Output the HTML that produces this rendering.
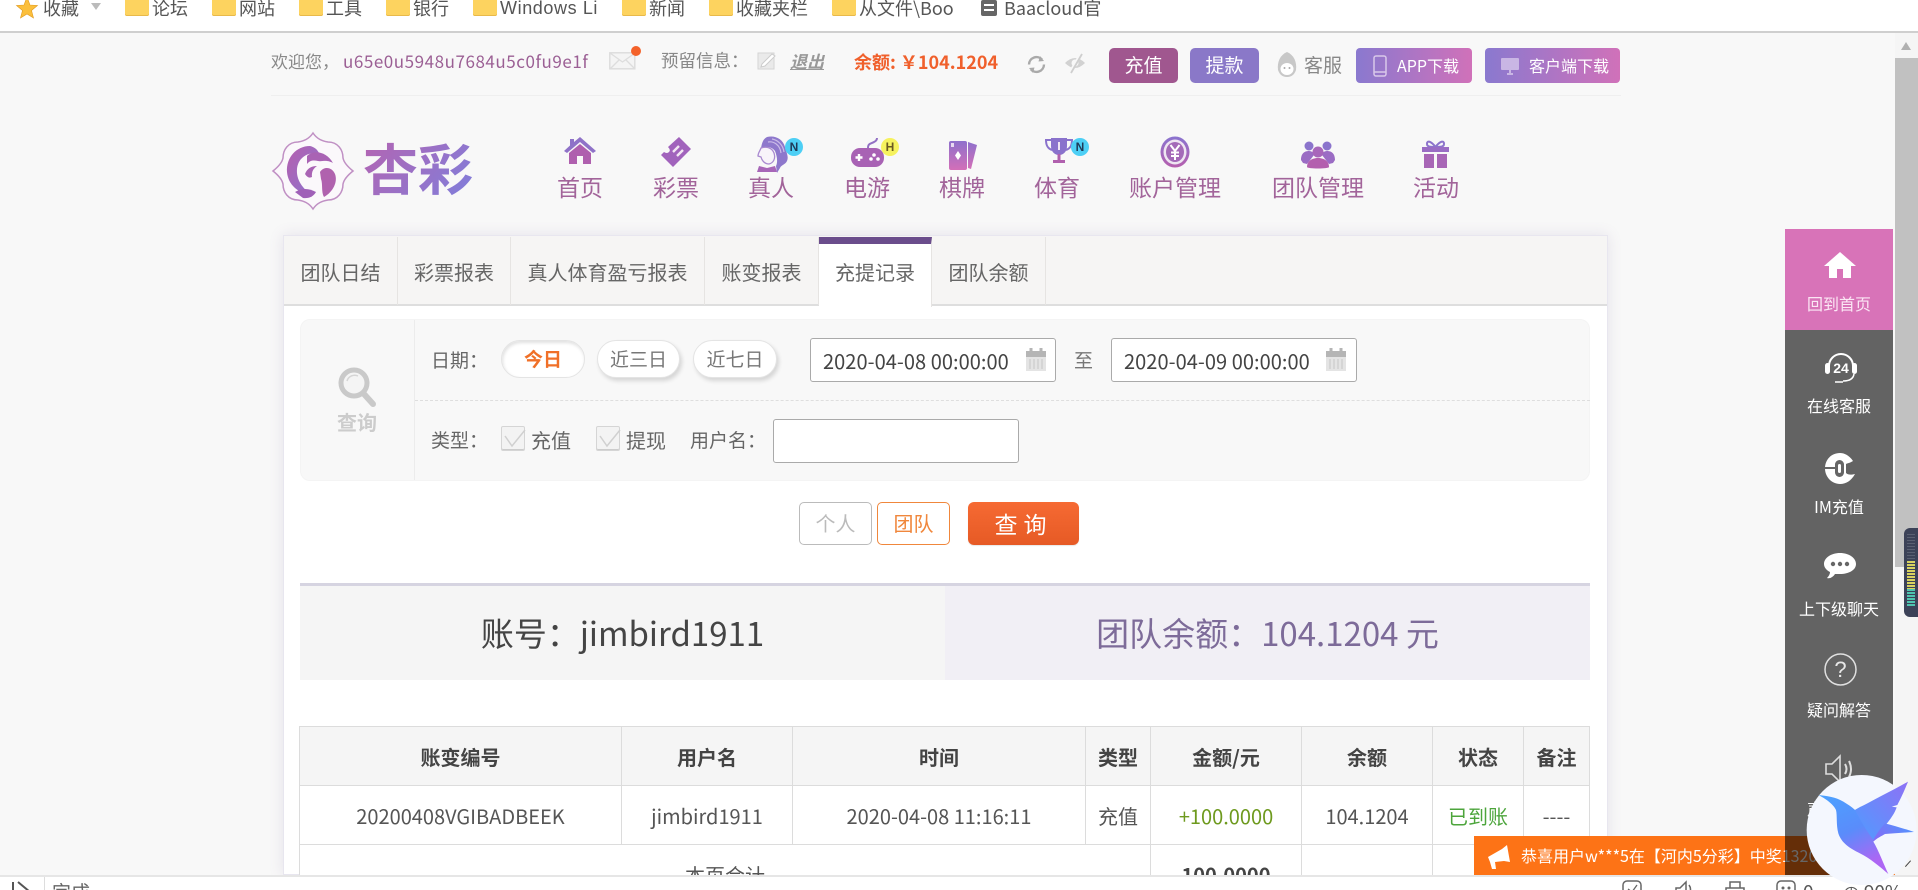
<!DOCTYPE html>
<html lang="zh">
<head>
<meta charset="utf-8">
<title>充提记录</title>
<style>
*{box-sizing:border-box;margin:0;padding:0}
html,body{width:1918px;height:890px;overflow:hidden;background:#f8f8f8}
body{position:relative;font-family:"Noto Sans CJK SC","Liberation Sans",sans-serif;color:#666}
.a{position:absolute;white-space:nowrap}
.c{text-align:center}
svg{position:absolute;overflow:visible}
.bm{font-size:18px;color:#555;top:-5px;line-height:26px;font-weight:400}
.fd{position:absolute;top:0;width:24px;height:16px;background:#fdd35f;border-radius:0 0 2px 2px;box-shadow:inset 0 -1px 0 #e8b94a}
.nav{font-size:23px;line-height:30px;color:#a2649a;top:171px;text-align:center}
.tab{position:absolute;top:237px;height:68px;line-height:70px;font-size:20px;color:#666;text-align:center;border-right:1px solid #e6e4e2}
.pill{position:absolute;top:340px;height:38px;line-height:36px;background:#fff;border:1px solid #e4e4e4;border-radius:19px;font-size:19px;text-align:center;color:#777;box-shadow:2px 3px 4px rgba(0,0,0,.14)}
.inp{position:absolute;background:#fff;border:1px solid #aaa;border-radius:3px;height:44px;width:246px}
.dt{position:absolute;font-size:20px;line-height:44px;color:#444;white-space:nowrap}
.lb{font-size:19px;line-height:26px;color:#666}
.cb{position:absolute;top:426px;width:24px;height:25px;background:#f3f3f3;border:1px solid #d5d5d5;border-radius:2px;box-shadow:inset 0 -1px 0 #ccc}
.side{font-size:16px;line-height:22px;color:#fff;left:1785px;width:108px;text-align:center}
table{position:absolute;left:299px;top:726px;width:1290px;border-collapse:collapse;table-layout:fixed;background:#fff}
td,th{border:1px solid #dcdcdc;height:59px;text-align:center;font-size:20px;color:#555;font-weight:400;padding:0}
th{background:#f5f5f5;font-size:20px;font-weight:700;color:#444}
</style>
</head>
<body>
<!-- bookmarks bar -->
<div class="a" style="left:0;top:0;width:1918px;height:31px;background:#fff"></div>
<div class="a" style="left:0;top:31px;width:1918px;height:2px;background:#cfcfcf"></div>
<svg style="left:16px;top:0" width="22" height="20" viewBox="0 0 22 20"><path d="M11-3 14 5 21.500 5.500 15.500 10.500 17.500 18 11 14 4.500 18 6.500 10.500 .5 5.500 8 5Z" fill="#fbbf3c" stroke="#e09a20" stroke-width=".6"/></svg>
<div class="a bm" style="left:43px">收藏</div>
<div class="a" style="left:91px;top:3px;border:5px solid transparent;border-top:7px solid #bbb"></div>
<div class="fd" style="left:125px"></div><div class="a bm" style="left:152px">论坛</div>
<div class="fd" style="left:212px"></div><div class="a bm" style="left:239px">网站</div>
<div class="fd" style="left:299px"></div><div class="a bm" style="left:326px">工具</div>
<div class="fd" style="left:386px"></div><div class="a bm" style="left:413px">银行</div>
<div class="fd" style="left:473px"></div><div class="a bm" style="left:500px;font-family:'Liberation Sans',sans-serif;letter-spacing:.6px">Windows Li</div>
<div class="fd" style="left:622px"></div><div class="a bm" style="left:649px">新闻</div>
<div class="fd" style="left:709px"></div><div class="a bm" style="left:736px">收藏夹栏</div>
<div class="fd" style="left:832px"></div><div class="a bm" style="left:859px">从文件\Boo</div>
<div class="a" style="left:981px;top:0;width:16px;height:16px;background:#666;border-radius:2px"></div>
<div class="a" style="left:984px;top:4px;width:10px;height:2px;background:#fff"></div>
<div class="a" style="left:984px;top:9px;width:10px;height:2px;background:#fff"></div>
<div class="a bm" style="left:1004px">Baacloud官</div>

<!-- top info row -->
<div class="a" style="left:271px;top:49px;font-size:17px;line-height:24px;color:#888">欢迎您，</div>
<div class="a" style="left:343px;top:49px;font-size:17px;line-height:24px;color:#9b5f94;letter-spacing:.55px">u65e0u5948u7684u5c0fu9e1f</div>
<svg style="left:609px;top:52px" width="28" height="18" viewBox="0 0 28 18"><rect x=".8" y=".8" width="25" height="16" fill="#f4f4f4" stroke="#ddd" stroke-width="1.500"/><path d="M1 1 13.500 10 26 1M1 17 10 8M26 17 17 8" fill="none" stroke="#ddd" stroke-width="1.300"/></svg>
<div class="a" style="left:631px;top:46px;width:10px;height:10px;border-radius:50%;background:#f4622a"></div>
<div class="a" style="left:661px;top:49px;font-size:17.5px;line-height:24px;color:#888">预留信息：</div>
<svg style="left:757px;top:52px" width="20" height="18" viewBox="0 0 20 18"><path d="M1 1H17V17H1Z" fill="#eaeaea" stroke="#d5d5d5"/><path d="M5 12 15 2 18 4 8 14 4 15Z" fill="#fff" stroke="#ccc"/></svg>
<div class="a" style="left:790px;top:49px;font-size:17px;line-height:24px;color:#999;font-weight:700;font-style:italic;text-decoration:underline">退出</div>
<div class="a" style="left:854px;top:50px;font-size:18px;line-height:24px;color:#f0602c;font-weight:700">余额: ￥104.1204</div>
<svg style="left:1026px;top:54px" width="21" height="21" viewBox="0 0 21 21"><path d="M3 10.500A7.500 7.500 0 0 1 16 5.500M18 10.500A7.500 7.500 0 0 1 5 15.500" fill="none" stroke="#aaa" stroke-width="2.400"/><path d="M14 2 18 7 12.500 7.500ZM7 19 3 14 8.500 13.500Z" fill="#aaa"/></svg>
<svg style="left:1064px;top:53px" width="22" height="21" viewBox="0 0 22 21"><path d="M1 10Q11 0 21 10 11 20 1 10Z" fill="#d2d2d2"/><circle cx="11" cy="10" r="3.500" fill="#f8f8f8"/><path d="M6 20 17 1" stroke="#f8f8f8" stroke-width="3.500"/><path d="M7 20 18 1" stroke="#cfcfcf" stroke-width="1.800"/></svg>
<div class="a c" style="left:1109px;top:48px;width:69px;height:35px;line-height:34px;border-radius:5px;background:#a0578f;color:#fff;font-size:19px">充值</div>
<div class="a c" style="left:1190px;top:48px;width:69px;height:35px;line-height:34px;border-radius:5px;background:#8a78c8;color:#fff;font-size:19px">提款</div>
<svg style="left:1277px;top:52px" width="20" height="26" viewBox="0 0 20 26"><path d="M10 0C3 3 0 10 1 18 3 24 7 25 10 25 13 25 17 24 19 18 20 10 17 3 10 0Z" fill="#c8c8c8"/><ellipse cx="10" cy="17" rx="6.500" ry="6" fill="#fff"/><circle cx="7.500" cy="16" r="1" fill="#aaa"/><circle cx="12.500" cy="16" r="1" fill="#aaa"/></svg>
<div class="a" style="left:1304px;top:52px;font-size:19px;line-height:26px;color:#888">客服</div>
<div class="a" style="left:1356px;top:48px;width:116px;height:35px;border-radius:4px;background:linear-gradient(90deg,#8a79cf,#d071b9)"></div>
<svg style="left:1373px;top:55px" width="14" height="22" viewBox="0 0 14 22"><rect x="1" y="1" width="12" height="20" rx="2" fill="none" stroke="#d9c8ea" stroke-width="1.500"/><path d="M1 17H13" stroke="#d9c8ea" stroke-width="1.500"/></svg>
<div class="a" style="left:1397px;top:53px;font-size:16px;line-height:25px;color:#fff">APP下载</div>
<div class="a" style="left:1485px;top:48px;width:135px;height:35px;border-radius:4px;background:linear-gradient(90deg,#8a79cf,#d071b9)"></div>
<svg style="left:1500px;top:57px" width="20" height="18" viewBox="0 0 20 18"><rect x="1" y="1" width="18" height="12" rx="1" fill="#c9b6e4"/><path d="M7 17H13M10 13V17" stroke="#c9b6e4" stroke-width="2"/></svg>
<div class="a" style="left:1529px;top:53px;font-size:16px;line-height:25px;color:#fff">客户端下载</div>
<div class="a" style="left:271px;top:95px;width:1350px;height:1px;background:#efefef"></div>

<!-- logo -->
<svg style="left:272px;top:132px" width="82" height="78" viewBox="0 0 82 78">
<defs>
<linearGradient id="g1" x1="0" y1="0" x2="1" y2="1"><stop offset="0" stop-color="#b65fae"/><stop offset="1" stop-color="#8a74cf"/></linearGradient>
<linearGradient id="g2" x1="0" y1="0" x2="0" y2="1"><stop offset="0" stop-color="#8a74cf"/><stop offset="1" stop-color="#b65fae"/></linearGradient>
<linearGradient id="g3" x1="0" y1="0" x2="0" y2="1"><stop offset="0" stop-color="#8f70cc"/><stop offset="1" stop-color="#d36fb8"/></linearGradient>
<linearGradient id="g4" x1="0" y1="0" x2="1" y2=".6"><stop offset="0" stop-color="#b862ae"/><stop offset="1" stop-color="#867bd6"/></linearGradient>
</defs>
<path d="M41 1C45 7 50 9 56 10 66 10 71 18 71 26 72 31 76 35 81 39 76 43 72 47 71 52 71 60 66 68 56 68 50 69 45 71 41 77 37 71 32 69 26 68 16 68 11 60 11 52 10 47 6 43 1 39 6 35 10 31 11 26 11 18 16 10 26 10 32 9 37 7 41 1Z" fill="#fbf8fb" stroke="#c090c4" stroke-width="1.500"/>
<path d="M38 14C24 14 14 26 15 40 16 53 27 62 40 63 31 57 24 48 25 37 26 26 35 20 47 21 45 17 42 15 38 14Z" fill="url(#g1)"/>
<path d="M35 24C42 17 55 20 61 31 54 27 50 30 46 29 42 28 38 28 35 32Z" fill="#a963b4"/>
<path d="M48 40C52 34 60 35 63 42 66 50 61 60 52 65 49 60 51 52 49 47Z" fill="#b062ae"/>
<path d="M33 42Q36 34 45 34 39 38 40 45 36 47 33 42Z" fill="#a963b4"/>
<path d="M23 60Q33 54 44 60 40 67 31 66Z" fill="#a060b8"/>
</svg>
<svg style="left:363px;top:140px" width="112" height="60" viewBox="0 0 112 60"><text x="0" y="50" font-family="'Noto Sans CJK SC',sans-serif" font-size="55" font-weight="700" fill="url(#g4)" textLength="110" lengthAdjust="spacingAndGlyphs">杏彩</text></svg>

<!-- nav -->
<svg style="left:564px;top:137px" width="32" height="27" viewBox="0 0 32 27"><path d="M16 0 32 14 29 16 16 5 3 16 0 14 6 8.500V2H10V5Z" fill="#8f72c8"/><path d="M5 16 16 7 27 16V27H19V19H13V27H5Z" fill="#af5fae"/></svg>
<svg style="left:660px;top:136px" width="32" height="32" viewBox="0 0 32 32"><path d="M19 1 31 13 13 31 1 19 4 16Q7 18 9 16 11 14 8 11ZM19 1Z" fill="#a163bc"/><path d="M13 16 19 10M17 20 23 14" stroke="#f3e6f3" stroke-width="2.400"/></svg>
<svg style="left:754px;top:136px" width="36" height="37" viewBox="0 0 36 37"><path d="M13 1C21-1 29 3 31 11 32 16 35 20 33 25 31 29 27 29 26 32L23 37 22 30C24 26 23 20 21 15 18 11 13 10 7 12 8 7 9 3 13 1Z" fill="#8e78cc"/><path d="M7 12C13 10 18 12 20 17 22 23 19 27 15 28 11 28 8 25 7 21L4 20C4 17 6 15 7 12Z" fill="#f8f4fa" stroke="#a98ad0" stroke-width="1.300"/><path d="M5 30 13 32 21 30 23 36 3 36Z" fill="#a766b8"/><path d="M14 6C20 5 26 9 27 17M18 3C24 4 29 9 30 16" fill="none" stroke="#cbbce8" stroke-width="1.200"/></svg>
<div class="a c" style="left:785px;top:138px;width:18px;height:18px;border-radius:50%;background:#4dcff5;color:#1f3a58;font:700 12px/18px 'Liberation Sans',sans-serif">N</div>
<svg style="left:851px;top:138px" width="36" height="29" viewBox="0 0 36 29"><path d="M17 10C17 5 20 6 23 4 25 3 26 2 26 0" fill="none" stroke="#9270c4" stroke-width="2"/><rect x="0" y="10" width="33" height="19" rx="9" fill="#a862b4"/><path d="M8 16V23M4.500 19.500H11.500" stroke="#fff" stroke-width="2.400"/><circle cx="23" cy="17" r="1.800" fill="#fff"/><circle cx="27" cy="21" r="1.800" fill="#fff"/><circle cx="20" cy="21" r="1.800" fill="#fff"/></svg>
<div class="a c" style="left:881px;top:138px;width:18px;height:18px;border-radius:50%;background:#f6f25e;color:#6b5a20;font:700 12px/18px 'Liberation Sans',sans-serif">H</div>
<svg style="left:949px;top:140px" width="29" height="30" viewBox="0 0 29 30"><path d="M19 2 28 5 22 29 19 28Z" fill="url(#g3)"/><rect x="0" y="1" width="18" height="29" rx="2" fill="url(#g3)"/><path d="M9 11 12 15.500 9 20 6 15.500Z" fill="#fff"/><rect x="2" y="3" width="3" height="4" fill="#e8daf2"/></svg>
<svg style="left:1045px;top:137px" width="28" height="29" viewBox="0 0 28 29"><path d="M6 1H22V9C22 15 18 18 14 18 10 18 6 15 6 9Z" fill="#8a72cc"/><path d="M6 3H1C1 10 4 12 7 13M22 3H27C27 10 24 12 21 13" fill="none" stroke="#8a72cc" stroke-width="2"/><path d="M12.500 17H15.500V23H20V26H8V23H12.500Z" fill="#b060ae"/><path d="M13 5H15V13H13Z" fill="#f0e6f4"/></svg>
<div class="a c" style="left:1071px;top:138px;width:18px;height:18px;border-radius:50%;background:#4dcff5;color:#1f3a58;font:700 12px/18px 'Liberation Sans',sans-serif">N</div>
<svg style="left:1160px;top:136px" width="30" height="32" viewBox="0 0 30 32"><ellipse cx="15" cy="16" rx="14.500" ry="15.500" fill="url(#g2)"/><ellipse cx="15" cy="16" rx="11.500" ry="12.500" fill="#efe6f2"/><ellipse cx="15" cy="16" rx="9" ry="10" fill="#a46ab8"/><path d="M10.500 9 15 15 19.500 9M15 15V24M11 16.500H19M11 20H19" fill="none" stroke="#fff" stroke-width="2"/></svg>
<svg style="left:1301px;top:140px" width="34" height="29" viewBox="0 0 34 29"><circle cx="8" cy="6" r="4.500" fill="#8b74cc"/><circle cx="26" cy="6" r="4.500" fill="#8b74cc"/><path d="M0 20C0 13 4 11 8 11 11 11 13 13 13 15L6 24 2 23ZM34 20C34 13 30 11 26 11 23 11 21 13 21 15L28 24 32 23Z" fill="#9b6cc4"/><circle cx="17" cy="12" r="5.500" fill="#a866ba"/><path d="M6 27C6 21 11 18 17 18 23 18 28 21 28 27 28 29 6 29 6 27Z" fill="#b35fae"/></svg>
<svg style="left:1422px;top:141px" width="27" height="27" viewBox="0 0 27 27"><path d="M13.500 6C9 0 5-1 5 3 5 6 9 6 13.500 6 18 6 22 6 22 3 22-1 18 0 13.500 6Z" fill="none" stroke="#8d74cc" stroke-width="2"/><rect x="0" y="6" width="27" height="5" fill="#9a6cc4"/><rect x="2" y="13" width="10" height="14" fill="#a866b6"/><rect x="15" y="13" width="10" height="14" fill="#a866b6"/></svg>
<div class="a nav" style="left:540px;width:80px">首页</div>
<div class="a nav" style="left:636px;width:80px">彩票</div>
<div class="a nav" style="left:731px;width:80px">真人</div>
<div class="a nav" style="left:827px;width:80px">电游</div>
<div class="a nav" style="left:922px;width:80px">棋牌</div>
<div class="a nav" style="left:1017px;width:80px">体育</div>
<div class="a nav" style="left:1115px;width:120px">账户管理</div>
<div class="a nav" style="left:1258px;width:120px">团队管理</div>
<div class="a nav" style="left:1396px;width:80px">活动</div>

<!-- container -->
<div class="a" style="left:283px;top:235px;width:1325px;height:640px;background:#fff;border:1px solid #e8e6ef;box-shadow:0 0 14px rgba(110,90,150,.14)"></div>
<div class="a" style="left:284px;top:236px;width:1323px;height:70px;background:#f6f5f4;border-bottom:2px solid #dedede"></div>
<div class="tab" style="left:284px;width:114px">团队日结</div>
<div class="tab" style="left:398px;width:113px">彩票报表</div>
<div class="tab" style="left:511px;width:194px">真人体育盈亏报表</div>
<div class="tab" style="left:705px;width:114px">账变报表</div>
<div class="tab" style="left:819px;width:113px;height:70px;background:#fff;border-top:7px solid #6b4d8c;line-height:56px;color:#666">充提记录</div>
<div class="tab" style="left:932px;width:114px">团队余额</div>

<!-- search panel -->
<div class="a" style="left:300px;top:319px;width:1290px;height:162px;background:#f8f8f8;border-radius:10px;border:1px solid #f4f4f4"></div>
<div class="a" style="left:414px;top:320px;width:1px;height:160px;background:#ececec"></div>
<div class="a" style="left:415px;top:400px;width:1175px;border-top:1px dashed #dedede"></div>
<svg style="left:338px;top:367px" width="38" height="40" viewBox="0 0 38 40"><circle cx="16" cy="16" r="13" fill="#f4f4f4" stroke="#c9c9c9" stroke-width="5"/><path d="M26 27 35 37" stroke="#c9c9c9" stroke-width="6" stroke-linecap="round"/><path d="M9 14A8 8 0 0 1 20 9" fill="none" stroke="#d5d5d5" stroke-width="1.500"/></svg>
<div class="a c" style="left:314px;top:408px;width:86px;font-size:20px;line-height:28px;font-weight:700;color:#ccc">查询</div>

<div class="a lb" style="left:431px;top:347px">日期：</div>
<div class="pill" style="left:501px;width:84px;color:#f07028;font-weight:700;box-shadow:inset 1px 2px 3px rgba(0,0,0,.12)">今日</div>
<div class="pill" style="left:597px;width:83px">近三日</div>
<div class="pill" style="left:693px;width:84px">近七日</div>
<div class="inp" style="left:810px;top:338px"></div>
<div class="dt" style="left:823px;top:339px;letter-spacing:.05px">2020-04-08 00:00:00</div>
<svg style="left:1026px;top:348px" width="20" height="23" viewBox="0 0 20 23"><rect x="0" y="3" width="20" height="20" fill="#e4e4e4"/><rect x="0" y="3" width="20" height="6" fill="#b5b5b5"/><path d="M5 0V5M15 0V5" stroke="#b5b5b5" stroke-width="3"/><path d="M4 11V21M8 11V21M12 11V21M16 11V21" stroke="#c6c6c6"/></svg>
<div class="a lb" style="left:1074px;top:347px;color:#777">至</div>
<div class="inp" style="left:1111px;top:338px"></div>
<div class="dt" style="left:1124px;top:339px;letter-spacing:.05px">2020-04-09 00:00:00</div>
<svg style="left:1326px;top:348px" width="20" height="23" viewBox="0 0 20 23"><rect x="0" y="3" width="20" height="20" fill="#e4e4e4"/><rect x="0" y="3" width="20" height="6" fill="#b5b5b5"/><path d="M5 0V5M15 0V5" stroke="#b5b5b5" stroke-width="3"/><path d="M4 11V21M8 11V21M12 11V21M16 11V21" stroke="#c6c6c6"/></svg>

<div class="a lb" style="left:431px;top:427px">类型：</div>
<div class="cb" style="left:501px"></div>
<svg style="left:501px;top:426px" width="24" height="25" viewBox="0 0 24 25"><path d="M4 10 11 20 24 4" fill="none" stroke="#d0d0d0" stroke-width="1.500"/></svg>
<div class="a lb" style="left:531px;top:427px;font-size:20px">充值</div>
<div class="cb" style="left:596px"></div>
<svg style="left:596px;top:426px" width="24" height="25" viewBox="0 0 24 25"><path d="M4 10 11 20 24 4" fill="none" stroke="#d0d0d0" stroke-width="1.500"/></svg>
<div class="a lb" style="left:626px;top:427px;font-size:20px">提现</div>
<div class="a lb" style="left:690px;top:427px">用户名：</div>
<div class="inp" style="left:773px;top:419px"></div>

<!-- buttons -->
<div class="a c" style="left:799px;top:502px;width:73px;height:43px;line-height:40px;border:1px solid #bbb;border-radius:5px;background:#fff;color:#bbb;font-size:20px">个人</div>
<div class="a c" style="left:877px;top:502px;width:73px;height:43px;line-height:40px;border:1px solid #f0873c;border-radius:5px;background:#fff;color:#f0873c;font-size:20px">团队</div>
<div class="a c" style="left:968px;top:502px;width:111px;height:43px;line-height:42px;border-radius:6px;background:linear-gradient(#f66a33,#e65a25);color:#fff;font-size:23px;letter-spacing:6px;box-shadow:0 1px 1px rgba(0,0,0,.1)">查询</div>

<!-- summary -->
<div class="a" style="left:300px;top:583px;width:1290px;height:3px;background:#d6d4e1"></div>
<div class="a c" style="left:300px;top:586px;width:645px;height:94px;line-height:92px;background:#f5f5f5;font-size:33px;color:#444">账号：jimbird1911</div>
<div class="a c" style="left:945px;top:586px;width:645px;height:94px;line-height:92px;background:#f1eff5;font-size:33px;color:#7d6b99">团队余额：104.1204 元</div>

<!-- table -->
<table>
<colgroup><col style="width:322px"><col style="width:171px"><col style="width:293px"><col style="width:65px"><col style="width:151px"><col style="width:131px"><col style="width:91px"><col style="width:66px"></colgroup>
<tr><th>账变编号</th><th>用户名</th><th>时间</th><th>类型</th><th>金额/元</th><th>余额</th><th>状态</th><th>备注</th></tr>
<tr><td>20200408VGIBADBEEK</td><td>jimbird1911</td><td>2020-04-08 11:16:11</td><td>充值</td><td style="color:#6e9a1e">+100.0000</td><td>104.1204</td><td style="color:#4da53c">已到账</td><td>----</td></tr>
<tr><td colspan="4">本页合计</td><td style="font-weight:700;color:#444">100.0000</td><td></td><td></td><td></td></tr>
</table>

<!-- ticker -->
<div class="a" style="left:1474px;top:836px;width:421px;height:39px;background:#fd7316;overflow:hidden">
<svg style="left:14px;top:9px" width="22" height="24" viewBox="0 0 22 24"><path d="M0 12 14 4 19 0 22 17 16 16 7 17 8 24 4 24 2 17Z" fill="#fff"/></svg>
<div class="a" style="left:47px;top:6px;font-size:16px;line-height:26px;color:#fff">恭喜用户w***5在【河内5分彩】中奖1320.00元</div>
</div>

<!-- scrollbar -->
<div class="a" style="left:1895px;top:33px;width:23px;height:842px;background:#f5f5f5"></div>
<div class="a" style="left:1901px;top:42px;border:5px solid transparent;border-bottom:8px solid #b0b0b0;border-top:0"></div>
<div class="a" style="left:1895px;top:58px;width:23px;height:509px;background:#c1c1c1"></div>
<div class="a" style="left:1904px;top:528px;width:14px;height:89px;background:#3c4258;border-radius:6px 0 0 6px"></div>
<div class="a" style="left:1907px;top:534px;width:8px;height:27px;background:repeating-linear-gradient(#5a6072 0 1px,#3c4258 1px 3px)"></div>
<div class="a" style="left:1907px;top:561px;width:8px;height:28px;background:repeating-linear-gradient(#d8d260 0 2px,#3c4258 2px 3px)"></div>
<div class="a" style="left:1907px;top:589px;width:8px;height:18px;background:repeating-linear-gradient(#4fc4b0 0 2px,#3c4258 2px 3px)"></div>

<!-- sidebar -->
<div class="a" style="left:1785px;top:229px;width:108px;height:646px;background:rgba(0,0,0,.6)"></div>
<div class="a" style="left:1785px;top:229px;width:108px;height:101px;background:#d873b8"></div>
<svg style="left:1824px;top:252px" width="32" height="26" viewBox="0 0 32 26"><path d="M16 0 32 14H27V26H19V17H13V26H5V14H0Z" fill="#fff"/></svg>
<div class="a side" style="top:292px;color:#fbe6f4">回到首页</div>
<svg style="left:1825px;top:350px" width="32" height="34" viewBox="0 0 32 34"><path d="M4 16A12 12 0 1 1 28 16" fill="none" stroke="#fff" stroke-width="2"/><rect x="0" y="13" width="5" height="11" rx="2.500" fill="#fff"/><rect x="27" y="13" width="5" height="11" rx="2.500" fill="#fff"/><path d="M29 24Q28 31 18 31" fill="none" stroke="#fff" stroke-width="1.500"/><path d="M10 32H18" stroke="#fff" stroke-width="1.500"/><text x="16" y="23" text-anchor="middle" fill="#fff" font-family="'Liberation Sans',sans-serif" font-size="14" font-weight="700">24</text></svg>
<div class="a side" style="top:394px">在线客服</div>
<svg style="left:1825px;top:452px" width="30" height="33" viewBox="0 0 30 33"><path d="M28 9C24 3 19 1 15 1 6 1 0 8 0 16.500 0 25 7 32 15 32 21 32 26 29 30 22 26 23 23 23 21 21V12C23 11 25 11 28 9Z" fill="#fff"/><rect x="10" y="8" width="9" height="17" rx="4.500" fill="#666"/><rect x="13" y="12" width="3" height="9" rx="1.500" fill="#fff"/><path d="M0 16H10" stroke="#666" stroke-width="2"/></svg>
<div class="a side" style="top:495px">IM充值</div>
<svg style="left:1824px;top:553px" width="32" height="26" viewBox="0 0 32 26"><path d="M16 0C25 0 32 5 32 11 32 17 25 21 16 21 14 21 13 21 11 21 9 24 6 26 3 25 5 23 6 21 6 19 2 17 0 14 0 11 0 5 7 0 16 0Z" fill="#fff"/><circle cx="9" cy="11" r="2.200" fill="#666"/><circle cx="16" cy="11" r="2.200" fill="#666"/><circle cx="23" cy="11" r="2.200" fill="#666"/></svg>
<div class="a side" style="top:597px">上下级聊天</div>
<svg style="left:1824px;top:653px" width="33" height="33" viewBox="0 0 33 33"><circle cx="16.500" cy="16.500" r="15.500" fill="none" stroke="#e0e0e0" stroke-width="1.500"/><text x="16.500" y="24" text-anchor="middle" fill="#e8e8e8" font-family="'Liberation Sans',sans-serif" font-size="22">?</text></svg>
<div class="a side" style="top:698px">疑问解答</div>
<svg style="left:1825px;top:755px" width="30" height="28" viewBox="0 0 30 28"><path d="M1 9H7L15 1V27L7 19H1Z" fill="none" stroke="#ddd" stroke-width="1.600"/><path d="M20 9Q23 14 20 19M24 6Q28 14 24 22" fill="none" stroke="#ddd" stroke-width="2"/></svg>
<div class="a side" style="top:797px">声音开关</div>

<!-- status bar -->
<div class="a" style="left:0;top:875px;width:1918px;height:15px;background:#fff;border-top:2px solid #e6e6e6;overflow:hidden">
<svg style="left:12px;top:5px" width="20" height="14" viewBox="0 0 20 14"><path d="M1 0V14M6 0 18 10" fill="none" stroke="#555" stroke-width="2"/></svg>
<div class="a" style="left:44px;top:0;width:1px;height:15px;background:#ddd"></div>
<div class="a" style="left:52px;top:2px;font-size:19px;line-height:26px;color:#666">完成</div>
<svg style="left:1622px;top:3px" width="20" height="14" viewBox="0 0 20 14"><rect x="1" y="1" width="18" height="18" rx="4" fill="none" stroke="#666" stroke-width="1.500"/><path d="M6 9 10 12 15 5" fill="none" stroke="#666" stroke-width="1.300"/></svg>
<svg style="left:1674px;top:3px" width="20" height="14" viewBox="0 0 20 14"><path d="M2 8H6L12 2V16H2Z" fill="none" stroke="#666" stroke-width="1.500"/><path d="M15 5Q18 9 15 14" fill="none" stroke="#666" stroke-width="1.500"/></svg>
<svg style="left:1725px;top:3px" width="20" height="14" viewBox="0 0 20 14"><path d="M5 8V2H15V8M1 8H19V16H1Z" fill="none" stroke="#666" stroke-width="1.500"/></svg>
<svg style="left:1776px;top:3px" width="20" height="14" viewBox="0 0 20 14"><rect x="1" y="1" width="18" height="16" rx="4" fill="none" stroke="#666" stroke-width="1.500"/><circle cx="7" cy="8" r="1.500" fill="#666"/><circle cx="13" cy="8" r="1.500" fill="#666"/></svg>
<div class="a" style="left:1803px;top:2px;font-size:19px;line-height:26px;color:#555">0</div>
<div class="a" style="left:1843px;top:2px;font-size:19px;line-height:26px;color:#555">◷ 90%</div>
</div>

<!-- bird -->
<svg style="left:1760px;top:550px" width="158" height="340" viewBox="0 0 474 1020">
<defs>
<linearGradient id="b1" x1="0" y1="0" x2=".4" y2="1"><stop offset="0" stop-color="#4ba2ff"/><stop offset=".55" stop-color="#5a8cfb"/><stop offset="1" stop-color="#ad66f4"/></linearGradient>
<linearGradient id="b2" x1="1" y1="0" x2="0" y2="1"><stop offset="0" stop-color="#8e71f5"/><stop offset="1" stop-color="#4f9cff"/></linearGradient>
<linearGradient id="b3" x1="1" y1="0" x2="0" y2=".5"><stop offset="0" stop-color="#4b99ff"/><stop offset="1" stop-color="#8070f6"/></linearGradient>
</defs>
<circle cx="305" cy="840" r="165" fill="#f4f7fe"/>
<path d="M175 735C200 738 225 740 250 755 268 766 280 775 285 780 300 770 330 755 345 765 350 800 345 860 340 875 355 900 372 945 385 972 360 950 330 925 300 910 270 895 245 880 235 850 228 825 232 795 228 780 220 762 195 745 175 735Z" fill="url(#b1)"/>
<path d="M285 780C340 750 400 720 444 695 430 730 420 750 412 765L395 770 410 772C398 805 375 825 340 870 325 850 300 810 285 780Z" fill="url(#b2)"/>
<path d="M340 870C350 850 365 830 375 820 405 828 440 838 462 846 430 848 400 850 375 852 365 858 350 865 340 875Z" fill="url(#b3)"/>
<path d="M436 950 452 932" stroke="#444" stroke-width="3"/>
</svg>
</body>
</html>
